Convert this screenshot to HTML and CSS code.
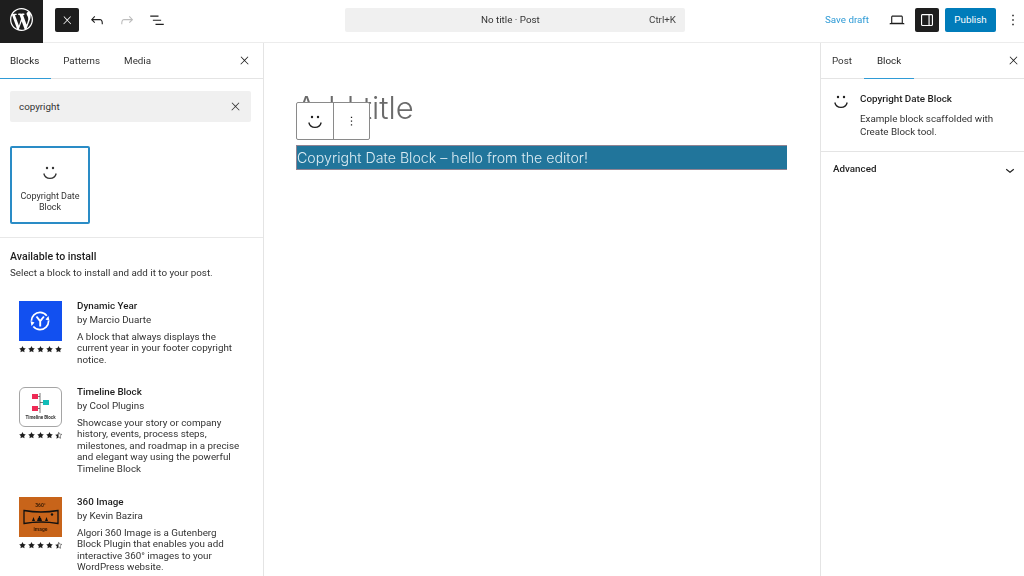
FILE: index.html
```html
<!DOCTYPE html>
<html lang="en">
<head>
<meta charset="utf-8">
<title>Edit Post</title>
<link rel="stylesheet" href="styles.css">
</head>
<body>
<svg class="defs" width="0" height="0" aria-hidden="true">
  <defs>
    <symbol id="i-close" viewBox="0 0 24 24"><path d="M13 11.8l6.1-6.3-1-1-6.1 6.2-6.1-6.2-1 1 6.1 6.3-6.5 6.7 1 1 6.5-6.6 6.5 6.6 1-1z"/></symbol>
    <symbol id="i-smile" viewBox="0 0 24 24"><circle cx="9" cy="6" r="1.2"/><circle cx="15" cy="6" r="1.2"/><path d="M5.8 11.500c1.600 6.600 10.800 6.600 12.400 0" fill="none" stroke="currentColor" stroke-width="1.300"/></symbol>
    <symbol id="i-star" viewBox="0 0 24 24"><path d="M12 3.2l2.700 5.600 6.100.9-4.400 4.300 1 6.100-5.400-2.900-5.400 2.900 1-6.100-4.400-4.300 6.100-.9z"/></symbol>
    <symbol id="i-half" viewBox="0 0 24 24"><path d="M12 3.200v14.900l-5.400 2.900 1-6.100-4.400-4.300 6.100-.9z"/><path d="M12 3.200l2.700 5.600 6.100.9-4.400 4.300 1 6.100-5.400-2.900" fill="none" stroke="currentColor" stroke-width="1.400"/></symbol>
    <symbol id="i-more" viewBox="0 0 24 24"><path d="M13 19h-2v-2h2v2zm0-6h-2v-2h2v2zm0-6h-2V5h2v2z"/></symbol>
  </defs>
</svg>
<div class="app">
  <header class="topbar">
    <div class="logo">
      <svg class="logo-mark" viewBox="0 0 20 20"><path d="M20 10c0-5.51-4.49-10-10-10C4.48 0 0 4.49 0 10c0 5.52 4.48 10 10 10 5.51 0 10-4.48 10-10zM7.78 15.37L4.37 6.22c.55-.02 1.17-.08 1.17-.08.5-.06.44-1.13-.06-1.11 0 0-1.45.11-2.37.11-.18 0-.37 0-.58-.01C4.12 2.69 6.87 1.11 10 1.11c2.33 0 4.45.87 6.05 2.34-.68-.11-1.65.39-1.65 1.58 0 .74.45 1.36.9 2.1.35.61.55 1.36.55 2.46 0 1.49-1.4 5-1.4 5l-3.03-8.37c.54-.02.82-.17.82-.17.5-.05.44-1.25-.06-1.22 0 0-1.44.12-2.38.12-.87 0-2.33-.12-2.33-.12-.5-.03-.56 1.2-.06 1.22l.92.08 1.26 3.41zM17.41 10c.24-.64.74-1.87.43-4.25.7 1.29 1.05 2.71 1.05 4.25 0 3.29-1.73 6.24-4.4 7.78.97-2.59 1.94-5.2 2.92-7.78zM6.1 18.09C3.12 16.65 1.11 13.53 1.11 10c0-1.3.23-2.48.72-3.59C3.25 10.3 4.67 14.2 6.1 18.09zm4.03-6.63l2.58 6.98c-.86.29-1.76.45-2.71.45-.79 0-1.57-.11-2.29-.33.81-2.38 1.62-4.74 2.42-7.1z"/></svg>
    </div>
    <div class="tools">
      <div class="icon-btn dark"><svg class="ico-sm"><use href="#i-close"/></svg></div>
      <div class="icon-btn"><svg class="ico" viewBox="0 0 24 24"><path d="M18.3 11.7c-.6-.6-1.4-.9-2.3-.9H6.7l2.9-3.3-1.1-1-4.5 5L8.5 16l1-1-2.7-2.7H16c.5 0 .9.2 1.3.5 1 1 1 3.4 1 4.5v.3h1.5v-.2c0-1.5 0-4.3-1.5-5.7z"/></svg></div>
      <div class="icon-btn faded"><svg class="ico" viewBox="0 0 24 24"><path d="M15.6 6.5l-1.1 1 2.9 3.3H8c-.9 0-1.7.3-2.3.9-1.4 1.5-1.4 4.2-1.4 5.6v.2h1.5v-.3c0-1.1 0-3.5 1-4.5.3-.3.7-.5 1.3-.5h9.2L14.5 15l1.1 1.1 4.6-4.6-4.6-5z"/></svg></div>
      <div class="icon-btn"><svg class="ico" viewBox="0 0 24 24"><path d="M3 6h11v1.5H3V6zm3.5 5.5h11V13h-11v-1.5zM21 17H10v1.5h11V17z"/></svg></div>
    </div>
    <div class="command">
      <span class="command-title">No title · Post</span>
      <span class="command-key">Ctrl+K</span>
    </div>
    <div class="actions">
      <span class="save">Save draft</span>
      <div class="icon-btn"><svg class="ico" viewBox="0 0 24 24"><path d="M20.5 16h-.7V8c0-1.1-.9-2-2-2H6.2c-1.1 0-2 .9-2 2v8h-.7c-.8 0-1.5.7-1.5 1.5h20c0-.8-.7-1.5-1.5-1.5zM5.7 8c0-.3.2-.5.5-.5h11.6c.3 0 .5.2.5.5v7.6H5.7V8z"/></svg></div>
      <div class="icon-btn dark"><svg class="ico" viewBox="0 0 24 24"><path d="M18 4H6c-1.1 0-2 .9-2 2v12c0 1.1.9 2 2 2h12c1.1 0 2-.9 2-2V6c0-1.1-.9-2-2-2zm-4 14.5H6c-.3 0-.5-.2-.5-.5V6c0-.3.2-.5.5-.5h8v13zm4.5-.5c0 .3-.2.5-.5.5h-2.5v-13H18c.3 0 .5.2.5.5v12z"/></svg></div>
      <div class="publish">Publish</div>
      <div class="icon-more"><svg class="ico"><use href="#i-more"/></svg></div>
    </div>
  </header>

  <div class="body">
    <aside class="inserter">
      <nav class="tabs">
        <span class="tab active">Blocks</span>
        <span class="tab">Patterns</span>
        <span class="tab">Media</span>
        <svg class="tab-close"><use href="#i-close"/></svg>
      </nav>
      <div class="search">
        <span>copyright</span>
        <svg class="search-x"><use href="#i-close"/></svg>
      </div>
      <div class="results">
        <div class="block-tile">
          <svg class="tile-ico"><use href="#i-smile"/></svg>
          <span>Copyright Date Block</span>
        </div>
      </div>
      <section class="install">
        <h2>Available to install</h2>
        <p class="install-sub">Select a block to install and add it to your post.</p>

        <article class="plugin">
          <div class="plugin-side">
            <svg class="plugin-ico" viewBox="0 0 43 40">
              <rect width="43" height="40" fill="#1250f0"/>
              <circle cx="21" cy="20" r="8.6" fill="none" stroke="#fff" stroke-width="1.7" stroke-dasharray="21 6"/>
              <path d="M17.5 15.5l3.7 4.7 3.7-4.7M21.2 20.2v5.4" fill="none" stroke="#fff" stroke-width="1.9"/>
              <path d="M29.5 15l1 5-4-1.5zM12.5 25l-1-5 4 1.5z" fill="#fff"/>
            </svg>
            <div class="stars"><svg><use href="#i-star"/></svg><svg><use href="#i-star"/></svg><svg><use href="#i-star"/></svg><svg><use href="#i-star"/></svg><svg><use href="#i-star"/></svg></div>
          </div>
          <div class="plugin-text">
            <h3>Dynamic Year</h3>
            <p class="by">by Marcio Duarte</p>
            <p class="desc">A block that always displays the current year in your footer copyright notice.</p>
          </div>
        </article>

        <article class="plugin plugin-tall">
          <div class="plugin-side">
            <div class="plugin-ico timeline">
              <svg class="timeline-art" viewBox="0 0 30 22">
                <path d="M14 1v20" stroke="#555" stroke-width=".8"/>
                <rect x="6" y="2" width="6" height="5" fill="#ee2a55"/>
                <rect x="6" y="14" width="6" height="5" fill="#ee2a55"/>
                <rect x="17" y="8" width="6" height="5" fill="#12bdb8"/>
                <path d="M12 4.500h2M12 16.500h2M14 10.500h3" stroke="#555" stroke-width=".8"/>
              </svg>
              <span class="timeline-label">Timeline Block</span>
            </div>
            <div class="stars"><svg><use href="#i-star"/></svg><svg><use href="#i-star"/></svg><svg><use href="#i-star"/></svg><svg><use href="#i-star"/></svg><svg><use href="#i-half"/></svg></div>
          </div>
          <div class="plugin-text">
            <h3>Timeline Block</h3>
            <p class="by">by Cool Plugins</p>
            <p class="desc">Showcase your story or company history, events, process steps, milestones, and roadmap in a precise and elegant way using the powerful Timeline Block</p>
          </div>
        </article>

        <article class="plugin">
          <div class="plugin-side">
            <div class="plugin-ico orange">
              <span class="orange-label">360°</span>
              <svg class="orange-art" viewBox="0 0 36 16">
                <path d="M1 1.500q17 3 34 0v13q-17-3-34 0z" fill="none" stroke="#111" stroke-width="1.300"/>
                <path d="M9 12l1.500-4 1.500 4zM14 12l1-3h.5l.5-2 1 0 .5 2h.5l1 3zM22 12l1.500-4 1.500 4z" fill="#111"/>
                <circle cx="29" cy="5.500" r="1.200" fill="#111"/>
              </svg>
              <span class="orange-label">image</span>
            </div>
            <div class="stars"><svg><use href="#i-star"/></svg><svg><use href="#i-star"/></svg><svg><use href="#i-star"/></svg><svg><use href="#i-star"/></svg><svg><use href="#i-half"/></svg></div>
          </div>
          <div class="plugin-text">
            <h3>360 Image</h3>
            <p class="by">by Kevin Bazira</p>
            <p class="desc">Algori 360 Image is a Gutenberg Block Plugin that enables you add interactive 360° images to your WordPress website.</p>
          </div>
        </article>
      </section>
    </aside>

    <main class="canvas">
      <div class="post">
        <h1 class="post-title">Add title</h1>
        <div class="block-toolbar">
          <div class="bt-cell"><svg class="bt-smile"><use href="#i-smile"/></svg></div>
          <div class="bt-cell"><svg class="bt-more"><use href="#i-more"/></svg></div>
        </div>
        <p class="post-block">Copyright Date Block – hello from the editor!</p>
      </div>
    </main>

    <aside class="settings">
      <nav class="tabs settings-tabs">
        <span class="tab">Post</span>
        <span class="tab active">Block</span>
        <svg class="tab-close"><use href="#i-close"/></svg>
      </nav>
      <div class="card">
        <svg class="card-ico"><use href="#i-smile"/></svg>
        <div class="card-text">
          <h3>Copyright Date Block</h3>
          <p>Example block scaffolded with Create Block tool.</p>
        </div>
      </div>
      <div class="panel">
        <span>Advanced</span>
        <svg class="ico-chev" viewBox="0 0 24 24"><path d="M17.500 11.600L12 16l-5.500-4.400.9-1.200L12 14l4.500-3.600 1 1.200z"/></svg>
      </div>
    </aside>
  </div>
</div>
</body>
</html>
```
FILE: styles.css
```css
* { box-sizing: border-box; }
html, body { margin: 0; height: 100%; overflow: hidden; }
body {
  font-family: Roboto, "Liberation Sans", sans-serif;
  font-size: 9.8px;
  line-height: 11.5px;
  color: #1e1e1e;
  background: #fff;
}
h1, h2, h3, p { margin: 0; font-weight: inherit; font-size: inherit; }
svg { fill: currentColor; display: block; }
.defs { position: absolute; }

.app { display: flex; flex-direction: column; width: 1024px; height: 576px; filter: blur(.3px); }

/* Top bar */
.topbar {
  flex: none;
  height: 43px;
  display: flex;
  align-items: center;
  border-bottom: 1px solid #ececec;
}
.logo {
  flex: none;
  width: 43px;
  height: 43px;
  padding-bottom: 3px;
  background: #1e1e1e;
  color: #fff;
  display: flex;
  align-items: center;
  justify-content: center;
}
.logo-mark { width: 23px; height: 23px; }
.tools { display: flex; align-items: center; margin-left: 12px; gap: 6px; width: 290px; margin-right: 0; margin-top: -2px; }
.icon-btn {
  flex: none;
  width: 24px;
  height: 24px;
  border-radius: 2px;
  display: flex;
  align-items: center;
  justify-content: center;
}
.icon-btn.dark { background: #1e1e1e; color: #fff; }
.icon-btn.faded { color: #bdbdbd; }
.ico { width: 18px; height: 18px; }
.ico-sm { width: 12.5px; height: 12.5px; }
.command {
  flex: none;
  width: 340px;
  height: 24px;
  margin-top: -2px;
  background: #f0f0f0;
  border-radius: 2px;
  display: flex;
  align-items: center;
  padding: 0 9px 0 136px;
  color: #333;
}
.command-title { flex: 1; }
.command-key { color: #444; }
.actions { display: flex; align-items: center; margin-left: 140px; margin-top: -2px; }
.save { flex: none; width: 45px; color: #2f9bd6; margin-right: 15px; white-space: nowrap; }
.actions .icon-btn.dark { margin: 0 6px; }
.publish {
  flex: none;
  width: 51px;
  height: 24px;
  background: #007cba;
  color: #fff;
  border-radius: 2px;
  display: flex;
  align-items: center;
  justify-content: center;
}
.icon-more { flex: none; margin-left: 8px; width: 18px; }

/* Panels */
.body { flex: 1; display: flex; min-height: 0; }
.inserter {
  flex: none;
  width: 264px;
  border-right: 1px solid #e4e4e4;
  overflow: hidden;
}
.canvas { flex: 1; padding: 43px 33px 0 32px; min-width: 0; }
.settings { flex: none; width: 204px; border-left: 1px solid #e4e4e4; }

.tabs {
  height: 36px;
  display: flex;
  align-items: stretch;
  border-bottom: 1px solid #e4e4e4;
  position: relative;
}
.tab {
  padding: 0 12px;
  display: flex;
  align-items: center;
  color: #333;
  position: relative;
}
.tab:first-child { padding-left: 10px; }
.tab.active { color: #1e1e1e; }
.tab.active::after {
  content: "";
  position: absolute;
  left: 0; right: 0; bottom: -1px;
  height: 1.500px;
  background: #2f9bd6;
}
.tab-close { position: absolute; top: 11px; right: 12.5px; width: 13px; height: 13px; }

.search {
  margin: 12px 12px 0 10px;
  height: 31px;
  background: #f0f0f0;
  border-radius: 2px;
  display: flex;
  align-items: center;
  justify-content: space-between;
  padding: 0 9px;
  color: #333;
}
.search-x { width: 13px; height: 13px; }
.results { padding: 24px 10px 13px; border-bottom: 1px solid #e8e8e8; }
.block-tile {
  width: 80px;
  height: 78px;
  border: 2px solid #2a8cc6;
  border-radius: 2px;
  display: flex;
  flex-direction: column;
  align-items: center;
  padding: 14px 6px 0;
  text-align: center;
  font-size: 9px;
  line-height: 10.500px;
  color: #333;
}
.tile-ico { width: 24px; height: 24px; margin-bottom: 5px; }

.install { padding: 12px 10px 0; }
.install h2 { font-weight: 500; line-height: 13px; font-size: 10.6px; }
.install-sub { margin-top: 4px; color: #333; }
.plugin { display: flex; padding: 21px 0 0 9px; height: 87px; }
.install-sub + .plugin { height: 86px; padding-top: 21px; }
.plugin-tall { height: 110px; }
.plugin-side { flex: none; width: 43px; margin-top: 1px; }
.plugin-ico { display: block; width: 43px; height: 40px; }
.timeline {
  border: 1px solid #a5a5a5;
  border-radius: 6px;
  background: #fff;
  display: flex;
  flex-direction: column;
  align-items: center;
  padding-top: 4px;
}
.timeline-art { width: 30px; height: 22px; flex: none; }
.timeline-label { font-size: 4.500px; line-height: 8px; font-weight: 700; color: #333; white-space: nowrap; }
.orange {
  background: #c8641a;
  display: flex;
  flex-direction: column;
  align-items: center;
  justify-content: center;
}
.orange-label { font-size: 5px; line-height: 6px; font-weight: 700; color: #3a1c05; }
.orange-art { width: 36px; height: 18px; }
.stars { display: flex; justify-content: space-between; margin: 3.500px -1px 0; }
.stars svg { width: 10.5px; height: 10.5px; }
.plugin-text { margin-left: 15px; flex: 1; min-width: 0; padding-right: 10px; }
.plugin-text h3 { font-weight: 500; line-height: 11.500px; }
.by { margin-top: 3px; color: #333; }
.desc { margin-top: 5px; color: #333; }

/* Canvas */
.post { position: relative; }
.post-title {
  font-family: Inter, "Open Sans", sans-serif;
  font-size: 31px;
  line-height: 44px;
  font-weight: 300;
  color: #6b6b6b;
  white-space: nowrap;
}
.block-toolbar {
  position: absolute;
  left: 0;
  top: 16px;
  display: flex;
  width: 74px;
  height: 38px;
  background: #fff;
  border: 1px solid #8a8a8a;
  border-radius: 2px;
}
.bt-cell { flex: 1; display: flex; align-items: center; justify-content: center; }
.bt-cell + .bt-cell { border-left: 1px solid #8a8a8a; }
.bt-smile { width: 24px; height: 24px; margin-top: 3px; }
.bt-more { width: 15px; height: 18px; }
.post-block {
  margin-top: 15px;
  height: 25px;
  background: #21759b;
  color: #dcecf3;
  font-family: Inter, "Open Sans", sans-serif;
  font-weight: 300;
  font-size: 14.200px;
  line-height: 23px;
  border: 1px solid rgba(220, 140, 140, .6);
  border-width: 1px 0 1px 1px;
  white-space: nowrap;
}

/* Settings */
.settings-tabs .tab:first-child { padding: 0 12px 0 11px; }
.settings-tabs .tab.active { padding: 0 13px; }
.settings-tabs .tab-close { right: 4px; }
.card { display: flex; padding: 14px 14px 13px 12px; border-bottom: 1px solid #e4e4e4; }
.card-ico { flex: none; width: 24px; height: 24px; margin: -2px 7px 0 -4px; }
.card-text h3 { font-weight: 500; line-height: 11px; }
.card-text p { margin-top: 7.500px; line-height: 13px; color: #333; }
.panel {
  height: 35px;
  padding: 0 4px 0 12px;
  display: flex;
  align-items: center;
  justify-content: space-between;
  font-weight: 500;
}
.ico-chev { width: 18px; height: 18px; margin-top: 2px; margin-right: 1px; }
```
